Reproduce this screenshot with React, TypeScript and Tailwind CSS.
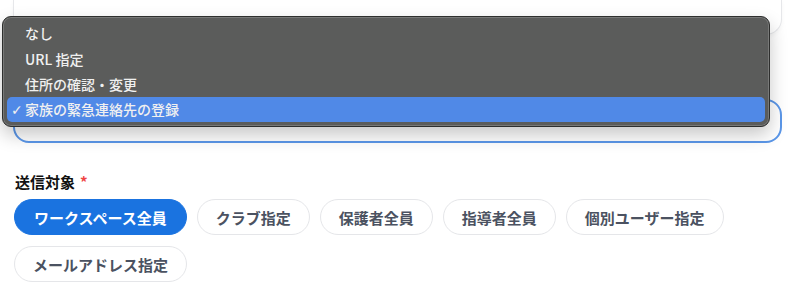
import React from "react";

const FONT = '"Noto Sans CJK JP", "Noto Sans", "Liberation Sans", sans-serif';

const targets = [
  "ワークスペース全員",
  "クラブ指定",
  "保護者全員",
  "指導者全員",
  "個別ユーザー指定",
  "メールアドレス指定",
];

const options = [
  { label: "なし", h: "h-[26px]" },
  { label: "URL 指定", h: "h-[26px]" },
  { label: "住所の確認・変更", h: "h-[25px]" },
  { label: "家族の緊急連絡先の登録", h: "h-[25px]", selected: true },
];

export default function App() {
  return (
    <div
      className="relative w-[800px] h-[295px] overflow-hidden bg-white pl-[13px] pr-[18px]"
      style={{ fontFamily: FONT }}
    >
      {/* previous field (cut off at top) */}
      <div className="h-[35px] rounded-b-[16px] border border-t-0 border-[#e6e7ea] bg-white shadow-[0_2px_4px_rgba(0,0,0,0.04)]" />

      {/* label row hidden by the menu */}
      <div className="mt-[36px] h-[20px]" />

      {/* select (focused) */}
      <div className="mt-[8px] h-[44px] rounded-[16px] border-2 border-[#5b97e9] bg-white" />

      {/* target label */}
      <div className="mt-[29px] h-[20px] pl-[2px] flex items-center text-[15px] leading-[20px] font-bold text-[#111111]">
        送信対象
        <span className="ml-[5px] text-[#ef4444]">*</span>
      </div>

      {/* target buttons */}
      <div className="mt-[7px] flex flex-wrap gap-x-[10px] gap-y-[11px] pl-[1px]">
        {targets.map((t, i) => (
          <button
            key={t}
            className={
              i === 0
                ? "h-[36px] rounded-full border border-[#1a73e0] bg-[#1a73e0] px-[19px] text-[15px] font-bold text-white leading-none"
                : "h-[36px] rounded-full border border-[#e5e6e9] bg-white px-[18px] text-[15px] font-bold text-[#4b5261] leading-none"
            }
            style={{ fontFamily: FONT }}
          >
            {t}
          </button>
        ))}
      </div>

      {/* native-style popup menu overlay */}
      <div className="absolute left-[2px] top-[16px] w-[768px] h-[111px] rounded-[9px] bg-[#5b5c5b] border border-[#2e2f2e] shadow-[0_8px_18px_rgba(0,0,0,0.22),inset_0_0_0_1px_rgba(255,255,255,0.18)] pt-[3px] px-[4px]">
        {options.map((o) => (
          <div
            key={o.label}
            className={
              (o.selected ? "bg-[#5089e7] rounded-[5px] " : "") +
              o.h +
              " relative flex items-center pl-[18px] text-[14px] font-medium text-[#f0f0f0]"
            }
          >
            {o.selected && (
              <span
                className="absolute left-[4px] text-[14px] font-bold leading-none"
                style={{ fontFamily: '"DejaVu Sans", sans-serif' }}
              >
                ✓
              </span>
            )}
            {o.label}
          </div>
        ))}
      </div>
    </div>
  );
}
